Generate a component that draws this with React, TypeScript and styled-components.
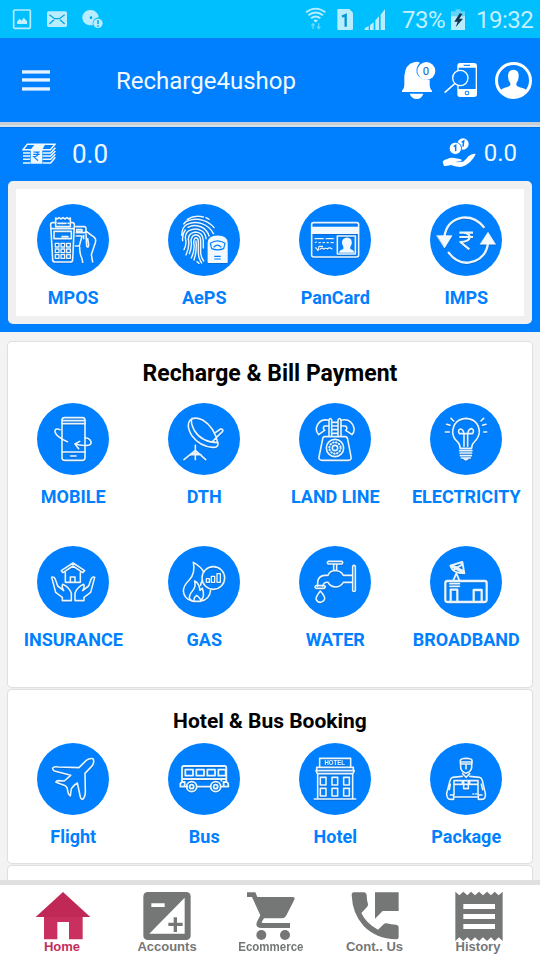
import React from "react";
import styled, { createGlobalStyle } from "styled-components";

const GlobalStyle = createGlobalStyle`
  * { box-sizing: border-box; }
  html, body { margin: 0; padding: 0; background: #f3f3f3; }
  body { font-family: Roboto, "Liberation Sans", sans-serif; overflow: hidden; }
  svg { display: block; flex: none; }
`;

const Screen = styled.div`
  width: 540px;
  height: 960px;
  display: flex;
  flex-direction: column;
  overflow: hidden;
  background: #f3f3f3;
`;

const StatusBar = styled.div`
  flex: none;
  height: 38px;
  display: flex;
  justify-content: space-between;
  padding: 0 7px 0 12px;
  background: #00bfff;
  color: #c5f0ff;
`;

const StatusGroup = styled.div<{ $gap: number }>`
  display: flex;
  align-items: center;
  gap: ${(p) => p.$gap}px;
`;

const StatusText = styled.span<{ $width: number; $indent?: number }>`
  width: ${(p) => p.$width}px;
  margin-left: ${(p) => p.$indent ?? 0}px;
  font-size: 24px;
  line-height: 38px;
  padding-top: 2px;
  letter-spacing: -0.5px;
  white-space: nowrap;
`;

const Header = styled.header`
  flex: none;
  height: 84px;
  display: flex;
  align-items: center;
  padding: 0 7px 0 22px;
  background: #0080ff;
`;

const MenuButton = styled.button`
  width: 28px;
  height: 21px;
  padding: 0;
  border: 0;
  background: none;
  display: flex;
  flex-direction: column;
  justify-content: space-between;
`;

const MenuLine = styled.span`
  height: 4px;
  background: #e6f4ff;
  border-bottom: 1px solid #8cc5ff;
  border-top: 1px solid #a5d2ff;
`;

const AppTitle = styled.h1`
  flex: 1;
  margin: 2px 0 0 66px;
  font-size: 24px;
  font-weight: 400;
  line-height: 28px;
  color: #f2faff;
`;

const HeaderActions = styled.div`
  display: flex;
  align-items: center;
`;

const Action = styled.div<{ $space: number }>`
  margin-left: ${(p) => p.$space}px;
`;

const Divider = styled.div`
  flex: none;
  height: 5px;
  background: linear-gradient(#c3d0e2 0 1px, #cdcdd0 1px 3px, #cde0ee 3px 5px);
`;

const WalletPanel = styled.section`
  flex: none;
  height: 205px;
  padding: 0 8px;
  background: #0080ff;
  border-top: 1px solid #0071e6;
`;

const Balances = styled.div`
  height: 53px;
  display: flex;
  justify-content: space-between;
  padding: 0 15px 0 14px;
`;

const Balance = styled.div<{ $gap: number; $size: number; $lift: number }>`
  display: flex;
  align-items: center;
  gap: ${(p) => p.$gap}px;
  padding-bottom: ${(p) => p.$lift}px;
  font-size: ${(p) => p.$size}px;
  color: #eef8ff;
`;

const FeatureCard = styled.div`
  height: 143px;
  padding: 8px;
  border-radius: 5px;
  background: #f0f0f0;
`;

const FeatureInner = styled.div`
  height: 127px;
  padding-top: 15px;
  background: #fff;
`;

const Grid = styled.div<{ $offset?: number }>`
  width: 524px;
  margin-left: ${(p) => p.$offset ?? -0.5}px;
  display: grid;
  grid-template-columns: repeat(4, 131px);
  row-gap: 38px;
`;

const Service = styled.div`
  display: flex;
  flex-direction: column;
  align-items: center;
  gap: 11px;
`;

const Disc = styled.div`
  width: 72px;
  height: 72px;
  border-radius: 50%;
  background: #0080ff;
`;

const IconSvg = styled.svg<{ $weight?: number }>`
  width: 72px;
  height: 72px;
  fill: none;
  stroke: #eaf5fb;
  stroke-width: ${(p) => p.$weight ?? 4.8};
  stroke-linejoin: round;
  stroke-linecap: round;
  filter: drop-shadow(0 1px 0.5px rgba(30, 70, 120, 0.35));
`;

const ServiceLabel = styled.div`
  height: 22px;
  padding-left: 0.5px;
  font-size: 18px;
  font-weight: 700;
  line-height: 22px;
  white-space: nowrap;
  color: #0080ff;
`;

const Sections = styled.main`
  flex: 1;
  min-height: 0;
  overflow: hidden;
  padding: 10px 8px 0;
  display: flex;
  flex-direction: column;
  gap: 3px;
`;

const Card = styled.section<{ $height: number; $top: number }>`
  flex: none;
  height: ${(p) => p.$height}px;
  padding-top: ${(p) => p.$top}px;
  border-radius: 4px;
  background: #fff;
  box-shadow: 0 0 1px 1px rgba(0, 0, 0, 0.09);
`;

const CardTitle = styled.h2<{ $size: number; $gap: number }>`
  margin: 0 0 ${(p) => p.$gap}px;
  height: 26px;
  font-size: ${(p) => p.$size}px;
  font-weight: 700;
  line-height: 26px;
  text-align: center;
  color: #000;
`;

const BottomNav = styled.nav`
  flex: none;
  height: 80px;
  padding: 6px 9px 0 11px;
  border-top: 5px solid #e0e0e0;
  background: #fff;
  display: grid;
  grid-template-columns: repeat(5, 104px);
`;

const NavItem = styled.div<{ $active?: boolean }>`
  display: flex;
  flex-direction: column;
  align-items: center;
  color: ${(p) => (p.$active ? "#c42d5b" : "#757777")};
`;

const NavLabel = styled.span<{ $scale?: number; $nudge?: number }>`
  font-family: "Liberation Sans", Arial, sans-serif;
  font-size: 13px;
  font-weight: 700;
  line-height: 14px;
  margin-top: -1px;
  margin-right: ${(p) => p.$nudge ?? 0}px;
  white-space: nowrap;
  transform: scaleX(${(p) => p.$scale ?? 1});
`;

const BLUE = "#0080ff";
const INK = "#f2faff";

const range = (n: number) => Array.from({ length: n }, (_, i) => i);

const MposIcon = () => (
  <IconSvg viewBox="111 252 216 216">
    <path d="M167 308H158Q152 308 152 314L158 420Q159 426 165 426H211Q217 426 218 420L223 314Q223 308 217 308H212" />
    <path d="M167 320V294L172 297L177 293L183 297L189 293L195 297L201 293L207 297L211 294V320ZM174 310H198M204 310H206M155 326H221M162 334H214V356H162ZM186 350H204" />
    {range(9).map((i) => (
      <rect key={i} x={166 + (i % 3) * 17} y={370 + Math.floor(i / 3) * 17} width="11" height="11" strokeWidth="4" />
    ))}
    <path d="M227 320H252Q258 320 258 326V338H229M230 329H246V335H230ZM229 348H246L238 378H226M251 347V356M257 333L283 352Q289 358 286 368L274 404L278 426M239 381Q239 404 246 416L248 427M258 343L260 378Q265 386 266 374L263 356" />
  </IconSvg>
);

const AepsIcon = () => (
  <IconSvg viewBox="504 252 216 216" $weight={4.4}>
    <path d="M562 298Q584 284 610 291M618 293L627 298M551 312Q557 303 568 301Q589 295 609 301Q630 308 642 323M545 346Q546 321 561 313Q582 303 605 311Q629 319 640 341M548 362Q546 342 556 330M564 322Q583 311 604 321Q622 330 627 348M552 389Q561 373 556 354Q556 339 567 332Q588 321 606 333Q617 341 618 356M558 405Q570 379 565 357Q566 339 586 336Q608 337 610 361V384M568 401Q577 379 573 361Q575 345 588 344Q602 347 602 362V399Q603 413 611 423M574 414Q586 389 581 366Q583 353 588 353Q595 354 595 365V397Q595 416 605 429M582 420Q591 395 588 363M591 425L597 430" />
    <path fill={INK} stroke={INK} d="M625 427V370Q625 349 653 349Q681 349 681 370V427Z" />
    <path stroke={BLUE} strokeWidth="3.5" d="M631 370Q653 355 675 370L671 386Q653 393 635 386ZM642 381Q652 370 663 381M644 409H661M644 417H661" />
  </IconSvg>
);

const PanIcon = () => (
  <IconSvg viewBox="87 252 216 216">
    <rect x="125" y="308" width="141" height="103" rx="6" />
    <path fill={INK} stroke="none" d="M124 320H267V342H124Z" />
    <path strokeWidth="3.5" d="M135 356H160M168 356H190M136 368L139 366M147 368H151M159 368H163M171 368H175M183 368H190M137 383L144 392L147 379H158M150 388Q157 381 161 388Q168 382 172 387Q178 380 186 387" />
    <path d="M202 348H256V402H202Z" />
    <path fill={INK} stroke="none" d="M207 398Q208 391 220 387V380Q212 368 219 358Q231 347 243 358Q249 371 241 380V387Q252 391 253 398Z" />
  </IconSvg>
);

const ImpsIcon = () => (
  <IconSvg viewBox="480 252 216 216">
    <path strokeWidth="7" d="M523 352Q529 302 577 293Q615 289 641 321M536 398Q560 431 596 428Q647 420 654 370" />
    <path fill={INK} stroke={INK} strokeWidth="2" d="M501 347H546L524 383ZM631 372L654 337L676 372Z" />
    <path strokeWidth="6.5" strokeLinecap="butt" d="M568 338H609M568 351H609M569 338H582Q599 340 599 352Q597 365 571 366L598 388" />
  </IconSvg>
);

const MobileIcon = () => (
  <IconSvg viewBox="111 204 216 216">
    <rect x="186" y="248" width="69" height="128" rx="8" />
    <path d="M186 257H255M186 266H255M186 351H255M212 363H228" />
    <path d="M180 284Q164 278 165 291Q169 306 202 320M256 308Q275 311 273 326Q267 337 225 327M225 327L239 319M225 327L236 341" />
  </IconSvg>
);

const DthIcon = () => (
  <IconSvg viewBox="504 204 216 216">
    <path d="M570 256Q583 243 608 255Q642 275 654 325Q655 339 638 337Q600 335 577 304Q557 273 570 256ZM576 250Q570 263 584 288Q605 322 654 323M636 321L667 290M647 292L662 282Q670 281 668 290" />
    <path d="M586 331V374M552 374L586 346L617 374M571 359H602M568 361L586 355L604 361" />
  </IconSvg>
);

const LandlineIcon = () => (
  <IconSvg viewBox="87 204 216 216">
    <path d="M177 256Q147 249 139 279Q138 291 146 299L164 286Q156 279 164 273H177ZM212 256Q243 248 252 279Q254 291 246 299L227 286Q235 279 226 273H212M177 302V255Q180 246 185 255V302M204 302V255Q209 246 213 255V302M185 262H204M185 273H204M185 284H204M185 295H204" />
    <path d="M164 305H226Q231 305 233 313L243 365Q245 376 236 376H155Q145 375 147 366L158 312Q159 305 164 305Z" />
    <circle cx="195" cy="339" r="26" />
    <circle cx="195" cy="339" r="17" strokeDasharray="2 7" strokeWidth="6" />
    <circle cx="195" cy="339" r="8" />
  </IconSvg>
);

const BulbIcon = () => (
  <IconSvg viewBox="480 204 216 216">
    <path d="M570 340Q571 329 562 320Q549 309 548 292Q550 253 588 250Q626 253 628 291Q627 307 613 321Q605 328 605 340ZM569 347H606M570 354H605M571 362H604M574 369H601M580 370Q588 379 595 370" />
    <path d="M582 334V297Q580 283 571 282Q562 286 568 296H608Q614 285 605 281Q595 282 593 297V334" />
    <path d="M543 250L551 258M530 268L540 271M526 291H538M633 258L641 250M638 271L648 268M641 291H650" />
  </IconSvg>
);

const InsuranceIcon = () => (
  <IconSvg viewBox="111 48 216 216">
    <path d="M184 122L219 99L254 122L248 128L219 108L189 128ZM196 128V157H241V128M211 157V141H225V157" />
    <path d="M187 212V202L167 187L155 142Q163 138 167 151L173 168L191 182Q184 170 188 163Q208 172 214 190V212ZM252 212V202L272 187L284 142Q276 138 272 151L266 168L248 182Q255 170 251 163Q231 172 225 190V212Z" />
  </IconSvg>
);

const GasIcon = () => (
  <IconSvg viewBox="504 48 216 216">
    <path d="M577 214Q552 207 550 183Q550 167 568 150Q587 128 580 97Q606 112 611 127M568 201Q570 190 580 179Q588 168 584 153Q598 160 600 181L607 175Q617 202 600 214H580Q568 210 568 201ZM582 214Q580 204 590 196Q604 207 602 214M602 214Q629 209 632 180M607 151Q602 159 602 166" />
    <circle cx="640" cy="144" r="34" />
    <path strokeWidth="4" d="M619 146H628V157H619ZM634 139H644V157H634ZM651 131H661V157H651Z" />
  </IconSvg>
);

const WaterIcon = () => (
  <IconSvg viewBox="87 48 216 216">
    <path d="M175 94H216Q220 97 216 102H175Q169 98 175 94ZM191 102H200V122H191ZM143 169V156Q145 137 165 136H174Q178 124 191 122H201Q215 125 220 136H248V157H220Q211 171 197 171Q181 170 174 157Q160 156 158 169M138 167H163Q169 170 163 175H138Q132 171 138 167ZM248 109Q252 103 256 109V182Q252 187 248 182ZM151 183Q138 200 138 207Q142 218 152 217Q164 214 164 204Q163 197 151 183Z" />
  </IconSvg>
);

const BroadbandIcon = () => (
  <IconSvg viewBox="480 48 216 216" $weight={5.6}>
    <path
      strokeWidth="6.8"
      d="M533 153H644Q650 153 650 159V209Q650 216 643 216H533Q526 216 526 209V159Q526 153 533 153ZM542 216V179H562V216M611 216V180H635V216"
    />
    <path d="M540 161H568M540 169H568M550 151L559 130L568 151" />
    <path d="M541 107L577 96L583 130ZM541 107Q548 130 583 130M553 118L576 104M547 105L582 125" />
  </IconSvg>
);

const FlightIcon = () => (
  <IconSvg viewBox="111 189 216 216">
    <path d="M158 264Q164 259 174 261L237 263L259 241Q268 234 279 236Q284 246 277 257L255 280L256 337Q255 352 248 358Q242 358 241 351L232 309Q222 315 214 326L211 348L205 341L201 323L196 317L168 307Q169 302 177 302L193 303L212 286L163 273Q157 270 158 264Z" />
  </IconSvg>
);

const BusIcon = () => (
  <IconSvg viewBox="504 189 216 216" $weight={5.4}>
    <path d="M546 306V264Q546 258 552 258H674Q679 258 679 264V306M546 297H679M541 320V311Q543 306 550 306H554V320H541M558 320H562M592 320H631M663 320H670M670 306H680Q686 308 685 320H671V306M664 302V297" />
    {range(4).map((i) => (
      <rect key={i} x={556 + i * 33} y="269" width={i === 3 ? 22 : 23} height="18" />
    ))}
    <circle cx="575" cy="320" r="15" />
    <circle cx="575" cy="320" r="6" />
    <circle cx="647" cy="320" r="15" />
    <circle cx="647" cy="320" r="6" />
  </IconSvg>
);

const HotelIcon = () => (
  <IconSvg viewBox="87 189 216 216">
    <path d="M149 260V235H242V260M140 272V262H250V272M138 272H253L249 281H142ZM143 281V357M248 281V357M133 357H257" />
    {range(6).map((i) => (
      <rect key={i} x={151 + (i % 3) * 35} y={292 + Math.floor(i / 3) * 33} width="17" height="23" />
    ))}
    <text
      x="194"
      y="255"
      textAnchor="middle"
      fontFamily="Liberation Sans"
      fontSize="20"
      fontWeight="700"
      textLength="61"
      lengthAdjust="spacingAndGlyphs"
      fill={INK}
      stroke="none"
    >
      HOTEL
    </text>
  </IconSvg>
);

const PackageIcon = () => (
  <IconSvg viewBox="480 189 216 216">
    <path d="M571 252V241Q573 235 588 235Q604 235 606 241V252ZM571 246H606M572 253V263Q574 276 588 280Q603 276 605 263V253M588 256V267M578 281L588 292L599 281" />
    <path d="M577 289L548 292Q542 294 540 302L530 340Q530 359 542 358H551V345H541M599 289L628 292Q635 294 637 302L646 340Q648 359 635 358H625V345H636M552 302H577V313H552ZM599 302H624V313H599ZM552 314V345M624 314V345M551 351H625M541 313L538 329M634 313L638 329M581 302H595V326H581ZM581 313H595M609 342H611M617 342H619" />
  </IconSvg>
);

interface ServiceData {
  label: string;
  icon: React.FC;
}

const featured: ServiceData[] = [
  { label: "MPOS", icon: MposIcon },
  { label: "AePS", icon: AepsIcon },
  { label: "PanCard", icon: PanIcon },
  { label: "IMPS", icon: ImpsIcon },
];

const recharge: ServiceData[] = [
  { label: "MOBILE", icon: MobileIcon },
  { label: "DTH", icon: DthIcon },
  { label: "LAND LINE", icon: LandlineIcon },
  { label: "ELECTRICITY", icon: BulbIcon },
  { label: "INSURANCE", icon: InsuranceIcon },
  { label: "GAS", icon: GasIcon },
  { label: "WATER", icon: WaterIcon },
  { label: "BROADBAND", icon: BroadbandIcon },
];

const booking: ServiceData[] = [
  { label: "Flight", icon: FlightIcon },
  { label: "Bus", icon: BusIcon },
  { label: "Hotel", icon: HotelIcon },
  { label: "Package", icon: PackageIcon },
];

const ServiceGrid = ({ items, offset }: { items: ServiceData[]; offset?: number }) => (
  <Grid $offset={offset}>
    {items.map(({ label, icon: Icon }) => (
      <Service key={label}>
        <Disc>
          <Icon />
        </Disc>
        <ServiceLabel>{label}</ServiceLabel>
      </Service>
    ))}
  </Grid>
);

const StatusIcons = () => (
  <StatusBar>
    <StatusGroup $gap={14}>
      <svg width="20" height="22" viewBox="36 24 60 66" fill="none">
        <rect x="41" y="30" width="50" height="55" rx="3" stroke="#b8ecff" strokeWidth="5" />
        <path d="M51 72V65L59 56L65 62L71 53L81 64V72Z" fill="#c5f0ff" />
      </svg>
      <svg width="22" height="22" viewBox="141 24 66 66" fill="none">
        <rect x="144" y="34" width="60" height="47" rx="5" fill="#b8ecff" />
        <path d="M151 44L167 56H181L197 44M151 72L165 59M197 72L183 59" stroke="#00a9e8" strokeWidth="4" />
      </svg>
      <svg width="22" height="22" viewBox="249 24 66 66">
        <path fill="#b8ecff" d="M276 30a23 23 0 0 1 23 22q-17 2-18 18l1 4a23 23 0 1 1-6-44Z" />
        <circle cx="276" cy="53" r="4" fill="#00a9e8" />
        <circle cx="297" cy="70" r="14" fill="#b8ecff" />
        <path d="M297 60V72M297 76V80" stroke="#00a9e8" strokeWidth="4.5" />
      </svg>
    </StatusGroup>
    <StatusGroup $gap={10}>
      <svg width="22" height="24" viewBox="105 18 66 72" fill="none" stroke="#b8ecff" strokeWidth="5.5">
        <path d="M108 34Q137 12 166 34M115 43Q137 26 159 43M123 52Q137 41 151 52" />
        <path d="M130 58Q137 53 144 58L137 65Z" fill="#b8ecff" stroke="none" />
        <path opacity=".55" strokeWidth="4" d="M129 84V69M124 74L129 68L134 74M146 67V82M141 77L146 83L151 77" />
      </svg>
      <svg width="17" height="24" viewBox="201 18 51 72">
        <path fill="#b8ecff" d="M206 24H238L249 35V83Q249 87 245 87H206Q202 87 202 83V28Q202 24 206 24Z" />
        <path d="M216 47L227 42V77" fill="none" stroke="#0095d0" strokeWidth="7" />
      </svg>
      <svg width="22" height="24" viewBox="282 18 66 72" fill="#b8ecff">
        <path d="M284 87V82L296 75V87ZM300 87V72L311 64V87ZM316 87V58L327 46V87ZM332 87V41L345 24V87Z" />
      </svg>
      <StatusText $width={38} $indent={6}>
        73%
      </StatusText>
      <svg width="16" height="24" viewBox="540 18 48 72">
        <path fill="#62d5fb" d="M557 25H572V31H585V87H543V31H557Z" />
        <path fill="#b8ecff" d="M543 46H585V87H543Z" />
        <path fill="#12384c" d="M569 37L553 62L563 62L557 79L579 53H568L577 39Z" />
      </svg>
      <StatusText $width={57}>19:32</StatusText>
    </StatusGroup>
  </StatusBar>
);

const BellIcon = () => (
  <svg width="35" height="39" viewBox="393 180 105 117">
    <path
      fill="#fff"
      d="M396 273V269Q403 264 403 252V224Q406 190 432 184Q441 180 450 185Q437 198 440 216Q448 238 479 237V252Q480 265 486 269V273ZM419 278H460Q455 294 440 294Q424 293 419 278Z"
    />
    <circle cx="469" cy="210" r="27" fill="#fff" />
    <text x="468" y="222" textAnchor="middle" fontFamily="Roboto" fontSize="34" fill="#0863c5">
      0
    </text>
  </svg>
);

const PhoneSearchIcon = () => (
  <svg width="34" height="36" viewBox="522 186 102 108">
    <path
      fill="#fff"
      fillRule="evenodd"
      d="M570 189H612Q621 189 621 198V283Q621 291 612 291H570Q562 291 562 283V198Q562 189 570 189ZM566 203V267H617V203Z"
    />
    <path d="M581 196H600" stroke={BLUE} strokeWidth="3.5" />
    <rect x="586" y="274" width="10" height="10" rx="2" fill="none" stroke={BLUE} strokeWidth="3" />
    <circle cx="571" cy="234" r="23" fill={BLUE} stroke="#fff" strokeWidth="4" />
    <path d="M555 250L524 278" stroke="#fff" strokeWidth="4.5" />
  </svg>
);

const ProfileIcon = () => (
  <svg width="39" height="39" viewBox="672 180 117 117">
    <circle cx="730.5" cy="238.5" r="51" fill="none" stroke="#fff" strokeWidth="9" />
    <path
      fill="#fff"
      d="M730 206Q748 207 746 226Q746 240 739 247V252Q742 258 758 261Q768 264 770 269Q754 286 730 286Q706 285 691 269Q694 263 704 260Q719 257 721 252V247Q714 239 714 226Q713 207 730 206Z"
    />
  </svg>
);

const CashIcon = () => (
  <svg width="34" height="24" viewBox="67 66 102 72" fill="none" stroke="#eef8ff" strokeWidth="4.5">
    <path d="M83 73H166L152 89H70ZM70 99H91M70 108H91M70 118H91M70 129H92M129 99H153L167 83M129 108H153L167 93M129 118H153L167 103M129 129H153L167 112" />
    <path d="M93 89L106 72H137L128 89V131H93Z" fill="#eef8ff" stroke="none" />
    <path d="M101 96H120M101 103H120M103 96Q117 96 115 103Q113 110 102 110L115 122" stroke={BLUE} strokeWidth="3.5" />
  </svg>
);

const CoinsIcon = () => (
  <svg width="35" height="30" viewBox="520 50 105 90">
    <circle cx="583" cy="68" r="17" fill="#fff" />
    <circle cx="560" cy="81" r="18.5" fill="#fff" stroke={BLUE} strokeWidth="3" />
    <path d="M555 76L561 72V90M579 63L585 59L583 76" fill="none" stroke={BLUE} strokeWidth="4.5" />
    <path
      fill="#fff"
      d="M522 122Q524 116 536 113Q545 107 557 110L573 113Q581 113 578 119L564 121L563 123L583 121Q592 116 599 105Q612 95 621 98Q618 107 605 121Q590 135 573 137Q557 135 547 131Q536 134 526 134Z"
    />
  </svg>
);

const HomeNavIcon = () => (
  <svg width="60" height="50" viewBox="99 123 180 150" fill="#c9305f">
    <path d="M132 198H248V268H207V216H172V268H132Z" />
    <path fill="#c02856" d="M189 126L271 201H107Z" />
  </svg>
);

const AccountsNavIcon = () => (
  <svg width="60" height="50" viewBox="411 123 180 150" fill="#757777">
    <rect x="430" y="126" width="142" height="144" rx="13" />
    <path fill="#fff" d="M554 143V251H448ZM454 160H494V171H454Z" />
    <path d="M505 223H548M526 202V246" stroke="#757777" strokeWidth="10" />
  </svg>
);

const CartNavIcon = () => (
  <svg width="60" height="50" viewBox="-87 123 180 150" fill="#757777">
    <path d="M-69 127H-44L-38 141H69Q76 142 73 149L48 198Q44 205 36 205H-18L-25 216Q-25 219 -20 219H60V234H-26Q-46 233 -39 215L-29 196L-54 141H-69Z" />
    <circle cx="-26" cy="255" r="15" />
    <circle cx="45" cy="255" r="15" />
  </svg>
);

const ContactNavIcon = () => (
  <svg width="60" height="50" viewBox="225 123 180 150" fill="#757777">
    <path d="M252 127H282Q289 127 290 135Q290 150 294 162Q295 167 291 171L274 189Q289 221 324 239L341 223Q345 219 350 220Q364 224 378 224Q386 225 386 232V260Q386 268 378 268Q318 266 281 228Q247 191 245 135Q245 127 252 127Z" />
    <path d="M315 127H386V183H338L315 206Z" />
  </svg>
);

const HistoryNavIcon = () => (
  <svg width="60" height="50" viewBox="537 123 180 150" fill="#757777">
    <path d="M556 125L568 136L580 125L592 136L603 125L615 136L627 125L639 136L651 125L663 136L674 125L686 136L698 125V273L686 262L674 273L663 262L651 273L639 262L627 273L615 262L603 273L592 262L580 273L568 262L556 273Z" />
    <path fill="#fff" d="M580 162H675V177H580ZM580 192H675V207H580ZM580 222H675V237H580Z" />
  </svg>
);

const navItems = [
  { label: "Home", icon: HomeNavIcon, active: true, nudge: 2 },
  { label: "Accounts", icon: AccountsNavIcon },
  { label: "Ecommerce", icon: CartNavIcon, scale: 0.885 },
  { label: "Cont.. Us", icon: ContactNavIcon, nudge: 1 },
  { label: "History", icon: HistoryNavIcon, nudge: 2 },
];

export default function App() {
  return (
    <>
      <GlobalStyle />
      <Screen>
        <StatusIcons />
        <Header>
          <MenuButton aria-label="Menu">
            <MenuLine />
            <MenuLine />
            <MenuLine />
          </MenuButton>
          <AppTitle>Recharge4ushop</AppTitle>
          <HeaderActions>
            <Action $space={0}>
              <BellIcon />
            </Action>
            <Action $space={8}>
              <PhoneSearchIcon />
            </Action>
            <Action $space={16}>
              <ProfileIcon />
            </Action>
          </HeaderActions>
        </Header>
        <Divider />
        <WalletPanel>
          <Balances>
            <Balance $gap={16} $size={26} $lift={2}>
              <CashIcon />
              0.0
            </Balance>
            <Balance $gap={7} $size={24} $lift={4}>
              <CoinsIcon />
              0.0
            </Balance>
          </Balances>
          <FeatureCard>
            <FeatureInner>
              <ServiceGrid items={featured} offset={-8.5} />
            </FeatureInner>
          </FeatureCard>
        </WalletPanel>
        <Sections>
          <Card $height={345} $top={19}>
            <CardTitle $size={23} $gap={16}>
              Recharge &amp; Bill Payment
            </CardTitle>
            <ServiceGrid items={recharge} />
          </Card>
          <Card $height={173} $top={18}>
            <CardTitle $size={21} $gap={9}>
              Hotel &amp; Bus Booking
            </CardTitle>
            <ServiceGrid items={booking} />
          </Card>
          <Card $height={40} $top={0} />
        </Sections>
        <BottomNav>
          {navItems.map(({ label, icon: Icon, active, scale, nudge }) => (
            <NavItem key={label} $active={active}>
              <Icon />
              <NavLabel $scale={scale} $nudge={nudge}>
                {label}
              </NavLabel>
            </NavItem>
          ))}
        </BottomNav>
      </Screen>
    </>
  );
}
